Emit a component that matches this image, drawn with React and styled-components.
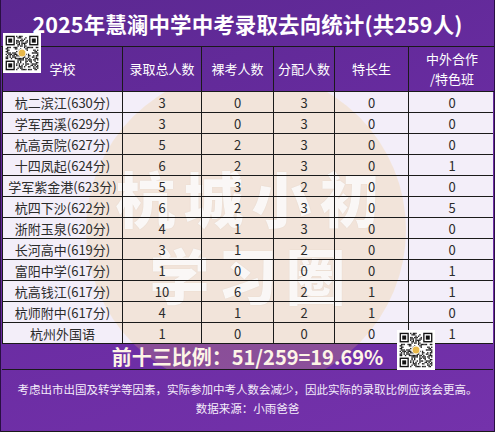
import React from "react";
import styled, { createGlobalStyle } from "styled-components";

const GlobalStyle = createGlobalStyle`
  html, body {
    margin: 0;
    padding: 0;
    background: #ffffff;
  }
  body {
    font-family: "Noto Sans CJK SC", "Noto Sans", sans-serif;
  }
`;

const cols = "121px 79px 72px 61px 74px 86px";

const rows = [
  ["杭二滨江(630分)", 3, 0, 3, 0, 0],
  ["学军西溪(629分)", 3, 0, 3, 0, 0],
  ["杭高贡院(627分)", 5, 2, 3, 0, 0],
  ["十四凤起(624分)", 6, 2, 3, 0, 1],
  ["学军紫金港(623分)", 5, 3, 2, 0, 0],
  ["杭四下沙(622分)", 6, 2, 3, 0, 5],
  ["浙附玉泉(620分)", 4, 1, 3, 0, 0],
  ["长河高中(619分)", 3, 1, 2, 0, 0],
  ["富阳中学(617分)", 1, 0, 0, 0, 1],
  ["杭高钱江(617分)", 10, 6, 2, 1, 1],
  ["杭师附中(617分)", 4, 1, 2, 1, 0],
  ["杭州外国语", 1, 0, 0, 0, 1],
];

// simple deterministic module pattern for the qr drawings
const qrCells = (() => {
  const n = 25;
  let seed = 7;
  const out = [];
  const inFinder = (x, y) =>
    (x < 8 && y < 8) || (x > n - 9 && y < 8) || (x < 8 && y > n - 9);
  for (let y = 0; y < n; y++) {
    for (let x = 0; x < n; x++) {
      seed = (seed * 1103515245 + 12345) % 2147483648;
      if (inFinder(x, y)) continue;
      if (seed % 100 < 48) out.push([x, y]);
    }
  }
  return out;
})();

const Finder = ({ x, y }) => (
  <g>
    <rect x={x} y={y} width="7" height="7" fill="#111" />
    <rect x={x + 1} y={y + 1} width="5" height="5" fill="#fff" />
    <rect x={x + 2} y={y + 2} width="3" height="3" fill="#111" />
  </g>
);

const QrIcon = () => (
  <svg width="100%" height="100%" viewBox="0 0 29 29" preserveAspectRatio="none">
    <rect width="29" height="29" fill="#fff" />
    <g transform="translate(2 2)">
      {qrCells.map(([x, y]) => (
        <rect key={x + "-" + y} x={x} y={y} width="1" height="1" fill="#1a1a1a" />
      ))}
      <Finder x={0} y={0} />
      <Finder x={18} y={0} />
      <Finder x={0} y={18} />
      <circle cx="12.5" cy="12.5" r="3.2" fill="#fff" />
      <circle cx="12.5" cy="12.5" r="2.6" fill="#e8b84a" />
    </g>
  </svg>
);

const Page = styled.div`
  position: relative;
  width: 495px;
  height: 432px;
  overflow: hidden;
  display: flex;
  flex-direction: column;
  background: linear-gradient(160deg, #5b2891 0%, #6a2ca2 50%, #7432ab 100%);
  border-left: 1px solid #2a0f44;
  border-right: 1px solid #2a0f44;
  box-sizing: border-box;
`;

const TitleBar = styled.div`
  height: 47px;
  display: flex;
  align-items: center;
  justify-content: center;
  color: #ffffff;
  font-size: 21.5px;
  font-weight: 700;
  border-bottom: 1px solid #1a1a1a;
  box-sizing: border-box;
  letter-spacing: 0.1px;
`;

const Grid = styled.div`
  position: relative;
  z-index: 1;
  display: grid;
  grid-template-columns: ${cols};
  margin: ${({ $flush }) => ($flush ? "0" : "0 1px")};
`;

const HeadCell = styled.div`
  height: 45px;
  display: flex;
  flex-direction: column;
  align-items: center;
  justify-content: center;
  color: #ffffff;
  font-size: 13px;
  line-height: 20px;
  border-right: 1px solid #1a1a1a;
  border-bottom: 1px solid #1a1a1a;
  box-sizing: border-box;
  &:first-child {
    border-left: 1px solid #1a1a1a;
  }
  &:last-child {
    border-right: none;
  }
`;

const Body = styled.div`
  position: relative;
  overflow: hidden;
  background: linear-gradient(to bottom, #f3eef9 0, #f3eef9 252px, transparent 252px);
  margin: 0 1px;
`;

const Cell = styled.div`
  height: 21px;
  display: flex;
  align-items: center;
  justify-content: center;
  color: #2b2b2b;
  font-size: 13px;
  white-space: nowrap;
  border-right: 1px solid #1a1a1a;
  border-bottom: 1px solid #1a1a1a;
  border-left: ${({ $first }) => ($first ? "1px solid #1a1a1a" : "none")};
  box-sizing: border-box;
  ${({ $last }) => $last && "border-right: none;"}
`;

const Summary = styled.div`
  position: relative;
  z-index: 1;
  height: 26px;
  display: flex;
  align-items: center;
  justify-content: center;
  color: #fdf4e6;
  font-size: 20px;
  font-weight: 700;
  border-bottom: 1px solid #1a1a1a;
  box-sizing: border-box;
`;

const Footer = styled.div`
  flex: 1;
  display: flex;
  flex-direction: column;
  align-items: center;
  justify-content: center;
  padding-bottom: 4px;
  color: #f4ecfa;
  font-size: 11.5px;
  line-height: 19px;
  border-bottom: 1px solid #1a1a1a;
`;

const Circle = styled.div`
  position: absolute;
  z-index: 0;
  left: 84px;
  top: -22px;
  width: 320px;
  height: 320px;
  border-radius: 50%;
  background: rgba(243, 196, 110, 0.22);
  pointer-events: none;
`;

const Mark = styled.div`
  position: absolute;
  z-index: 0;
  left: 0;
  right: 0;
  top: ${({ $top }) => $top}px;
  text-align: center;
  font-size: 60px;
  font-weight: 900;
  line-height: 62px;
  letter-spacing: 8px;
  text-indent: 8px;
  color: rgba(255, 255, 255, 0.85);
  text-shadow: 0 0 1px rgba(120, 100, 90, 0.2);
  pointer-events: none;
`;

const Qr = styled.div`
  position: absolute;
  z-index: 2;
  left: ${({ $x }) => $x}px;
  top: ${({ $y }) => $y}px;
  width: 38px;
  height: 40px;
  background: #fff;
`;

export default function App() {
  return (
    <>
      <GlobalStyle />
      <Page>
        <TitleBar>2025年慧澜中学中考录取去向统计(共259人)</TitleBar>
        <Grid>
          <HeadCell>学校</HeadCell>
          <HeadCell>录取总人数</HeadCell>
          <HeadCell>裸考人数</HeadCell>
          <HeadCell>分配人数</HeadCell>
          <HeadCell>特长生</HeadCell>
          <HeadCell>
            <span>中外合作</span>
            <span>/特色班</span>
          </HeadCell>
        </Grid>
        <Body>
          <Circle />
          <Mark $top={74}>杭城小初</Mark>
          <Mark $top={151}>学习圈</Mark>
          <Grid $flush>
            {rows.map((r) =>
              r.map((v, i) => (
                <Cell key={r[0] + i} $first={i === 0} $last={i === r.length - 1}>
                  {v}
                </Cell>
              ))
            )}
          </Grid>
          <Summary>前十三比例：51/259=19.69%</Summary>
        </Body>
        <Footer>
          <span>考虑出市出国及转学等因素，实际参加中考人数会减少，因此实际的录取比例应该会更高。</span>
          <span>数据来源：小雨爸爸</span>
        </Footer>
        <Qr $x={2} $y={33}>
          <QrIcon />
        </Qr>
        <Qr $x={396} $y={330}>
          <QrIcon />
        </Qr>
      </Page>
    </>
  );
}
